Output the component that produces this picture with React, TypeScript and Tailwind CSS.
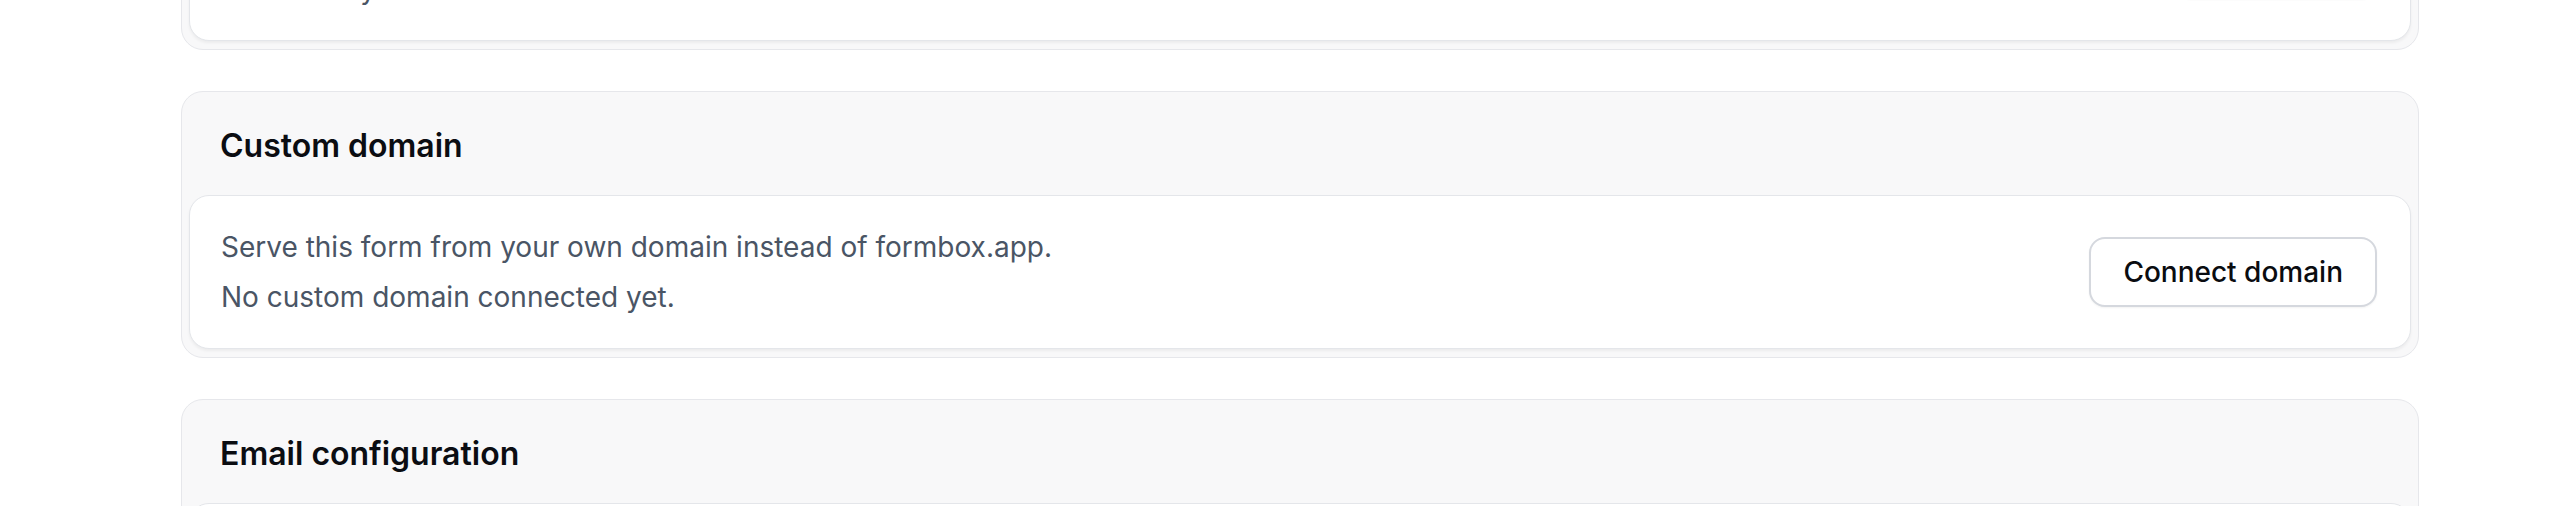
import React from "react";

type Section = {
  title: string;
  line1: string;
  line2: string;
  action: string;
};

const sections: Section[] = [
  {
    title: "Password protection",
    line1: "Require visitors to enter a password before they can open this form.",
    line2: "Disabled by default.",
    action: "Configure",
  },
  {
    title: "Custom domain",
    line1: "Serve this form from your own domain instead of formbox.app.",
    line2: "No custom domain connected yet.",
    action: "Connect domain",
  },
  {
    title: "Email configuration",
    line1: "Send notifications from your own sender address.",
    line2: "Using the default formbox.app sender.",
    action: "Configure email",
  },
];

function SectionCard({ s }: { s: Section }) {
  return (
    <div className="rounded-[22px] border border-[#e6e7eb] bg-[#f8f8f9] pb-[8px]">
      <div className="pl-[38px] pr-[38px] pt-[30px] pb-[25px]">
        <h2 className="text-[32px] leading-[48px] font-semibold text-[#0b0d12]">
          {s.title}
        </h2>
      </div>
      <div className="mx-[7px] flex items-center justify-between rounded-[20px] border border-[#e4e6ea] bg-white pl-[31px] pr-[33px] py-[31px] shadow-[0_2px_3px_rgba(0,0,0,0.05)]">
        <div className="flex flex-col gap-[10px] text-[28px] leading-[40px] text-[#4a5565]">
          <p>{s.line1}</p>
          <p>{s.line2}</p>
        </div>
        <button className="h-[70px] rounded-[16px] border-2 border-[#d5d8de] bg-white px-[32px] text-[28px] font-medium text-[#0a0c10] shadow-[0_1px_2px_rgba(0,0,0,0.05)]">
          {s.action}
        </button>
      </div>
    </div>
  );
}

export default function App() {
  return (
    <div
      className="min-h-screen bg-white"
      style={{ fontFamily: "Inter, 'Noto Sans', sans-serif" }}
    >
      <div className="mt-[-217px] flex flex-col gap-[41px] pl-[181px] pr-[135px] pb-[40px]">
        {sections.map((s) => (
          <SectionCard key={s.title} s={s} />
        ))}
      </div>
    </div>
  );
}
